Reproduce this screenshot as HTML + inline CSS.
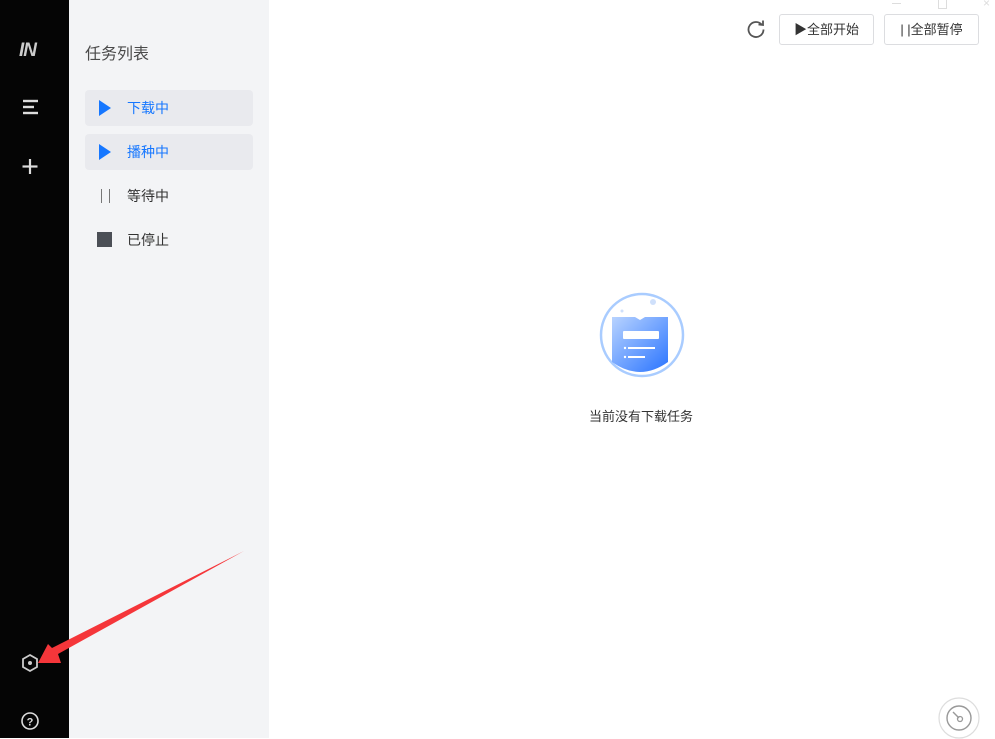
<!DOCTYPE html>
<html><head><meta charset="utf-8"><style>
*{margin:0;padding:0;box-sizing:border-box}
body{width:995px;height:738px;overflow:hidden;background:#fff;font-family:"Liberation Sans","Noto Sans CJK SC",sans-serif;position:relative}
.side{position:absolute;left:0;top:0;width:69px;height:738px;background:#050505}
.panel{position:absolute;left:69px;top:0;width:200px;height:738px;background:#f3f4f6}
.title{position:absolute;left:85px;top:40px;font-size:16px;color:#4a4a4a}
.item{position:absolute;left:85px;width:168px;height:36px;border-radius:4px;font-size:14px;line-height:36px;padding-left:42px;color:#333}
.item.on{background:#e9eaee;color:#1677ff}
.tri{position:absolute;left:14px;top:10px;width:0;height:0;border-left:12px solid #1677ff;border-top:8px solid transparent;border-bottom:8px solid transparent}
.btn{position:absolute;top:14px;height:31px;width:95px;border:1px solid #dcdde0;border-radius:3px;font-size:13px;line-height:29px;text-align:center;color:#333;background:#fff}
</style></head><body>
<div class="side"></div>
<div class="panel"></div>
<div style="position:absolute;left:19px;top:40px;color:#ccc;font-weight:bold;font-style:italic;font-size:19px;letter-spacing:-1px">IN</div>
<svg style="position:absolute;left:20px;top:98px" width="20" height="18"><g stroke="#ddd" stroke-width="2.4"><line x1="3" y1="3" x2="18" y2="3"/><line x1="3" y1="9" x2="14" y2="9"/><line x1="3" y1="15" x2="18" y2="15"/></g></svg>
<svg style="position:absolute;left:20px;top:156px" width="20" height="20"><g stroke="#ddd" stroke-width="2.2"><line x1="10" y1="3" x2="10" y2="18"/><line x1="2.5" y1="10.5" x2="17.5" y2="10.5"/></g></svg>
<svg style="position:absolute;left:20px;top:653px" width="20" height="20"><polygon points="10,2 17,6 17,14 10,18 3,14 3,6" fill="none" stroke="#ccc" stroke-width="1.8"/><circle cx="10" cy="10" r="2" fill="#ccc"/></svg>
<svg style="position:absolute;left:20px;top:711px" width="20" height="20"><circle cx="10" cy="10" r="8" fill="none" stroke="#ddd" stroke-width="1.6"/><text x="10" y="14.5" font-size="11" font-weight="bold" fill="#ddd" text-anchor="middle" font-family="Liberation Sans">?</text></svg>
<div class="title">任务列表</div>
<div class="item on" style="top:90px"><span class="tri"></span>下载中</div>
<div class="item on" style="top:134px"><span class="tri"></span>播种中</div>
<div class="item" style="top:178px"><span style="position:absolute;left:16px;top:11px;width:9px;height:14px;border-left:1.5px solid #777;border-right:1.5px solid #777"></span>等待中</div>
<div class="item" style="top:222px"><span style="position:absolute;left:12px;top:10px;width:15px;height:15px;background:#4b4f56"></span>已停止</div>
<svg style="position:absolute;left:745px;top:18px" width="22" height="22"><path d="M17 7 A7.5 7.5 0 1 0 18.5 11.5" fill="none" stroke="#555" stroke-width="1.8"/><path d="M13.5 6.5 L18 7 L18 2.5" fill="none" stroke="#555" stroke-width="1.8"/></svg>
<div class="btn" style="left:779px">▶全部开始</div>
<div class="btn" style="left:884px">| |全部暂停</div>
<div style="position:absolute;left:892px;top:3px;width:9px;border-top:1px solid #ddd"></div>
<div style="position:absolute;left:938px;top:0;width:9px;height:9px;border:1px solid #ddd;border-top:none"></div>
<div style="position:absolute;left:983px;top:-4px;color:#ddd;font-size:12px">×</div>
<svg style="position:absolute;left:598px;top:292px" width="88" height="88">
<defs><linearGradient id="g" x1="0" y1="0" x2="1" y2="1"><stop offset="0" stop-color="#b8d3ff"/><stop offset="1" stop-color="#2a74ff"/></linearGradient></defs>
<circle cx="44" cy="43" r="41" fill="#fff" stroke="#a9ccff" stroke-width="2.5"/>
<path d="M14 25 H37 L42 28 L47 25 H70 V70 Q42 90 14 70 Z" fill="url(#g)"/>
<circle cx="55" cy="10" r="3" fill="#cfe0fb"/><circle cx="24" cy="19" r="1.5" fill="#cfe0fb"/>
<rect x="25" y="39" width="36" height="8" rx="1" fill="#fff"/>
<circle cx="27" cy="56" r="1.2" fill="#fff"/><rect x="30" y="55" width="27" height="2" fill="#fff"/>
<circle cx="27" cy="65" r="1.2" fill="#fff"/><rect x="30" y="64" width="17" height="2" fill="#fff"/>
</svg>
<div style="position:absolute;left:541px;top:406px;width:200px;text-align:center;font-size:13px;color:#333">当前没有下载任务</div>
<svg style="position:absolute;left:937px;top:697px" width="44" height="42"><circle cx="22" cy="21" r="20" fill="#fff" stroke="#ddd" stroke-width="1.2"/><circle cx="22" cy="21" r="12" fill="none" stroke="#999" stroke-width="1.4"/><line x1="16" y1="15" x2="22" y2="21" stroke="#999" stroke-width="1.4"/><circle cx="23" cy="22" r="2.5" fill="none" stroke="#999" stroke-width="1.3"/></svg>
<svg style="position:absolute;left:0;top:540px" width="260" height="140"><polygon points="244,11 58,114 61,123 38,123 48,104 52,108" fill="#f5363a"/></svg>
</body></html>
